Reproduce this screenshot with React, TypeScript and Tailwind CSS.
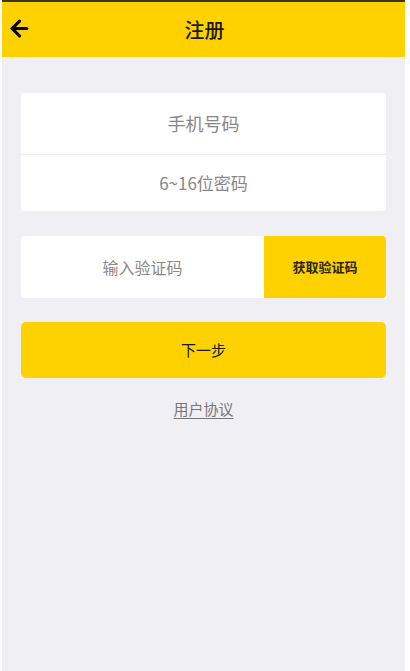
import React from 'react';
import { ArrowLeft } from 'lucide-react';

const font = { fontFamily: '"Noto Sans CJK SC", "Noto Sans", sans-serif' };

const App = () => {
  return (
    <div className="w-[410px] h-[671px] flex bg-white overflow-hidden" style={font}>
      <div className="w-[2px] shrink-0" />
      <div className="flex-1 flex flex-col bg-[#f0eff4]">
        {/* Top bar */}
        <div className="h-[2px] bg-[#3a3520]" />
        <header className="h-[55px] bg-[#fed100] flex items-center relative">
          <button className="absolute left-[5px] top-[14px] text-black" aria-label="back">
            <ArrowLeft size={25} strokeWidth={3} />
          </button>
          <h1 className="flex-1 text-center text-[20px] font-medium text-[#1c1a10] pl-[2px]">注册</h1>
        </header>

        <main className="flex flex-col px-[19px] pt-[36px]">
          {/* Phone & password */}
          <div className="bg-white rounded-[4px] flex flex-col">
            <div className="h-[62px] flex items-center justify-center text-[18px] text-[#888] border-b border-[#ececec]">
              手机号码
            </div>
            <div className="h-[56px] flex items-center justify-center text-[17px] text-[#888]">
              6~16位密码
            </div>
          </div>

          {/* Verification code */}
          <div className="mt-[25px] h-[62px] flex rounded-[4px] overflow-hidden">
            <div className="w-[243px] bg-white flex items-center justify-center text-[16px] text-[#888]">
              输入验证码
            </div>
            <button className="flex-1 bg-[#fed100] text-[13px] font-bold text-[#2a2510] flex items-center justify-center">
              获取验证码
            </button>
          </div>

          <button className="mt-[24px] h-[56px] bg-[#fed100] rounded-[5px] text-[15px] text-[#1c1a10] flex items-center justify-center">
            下一步
          </button>

          <div className="mt-[20px] flex justify-center">
            <a className="text-[15px] text-[#777] underline underline-offset-[3px]">用户协议</a>
          </div>
        </main>
      </div>
      <div className="w-[5px] shrink-0" />
    </div>
  );
};

export default App;
